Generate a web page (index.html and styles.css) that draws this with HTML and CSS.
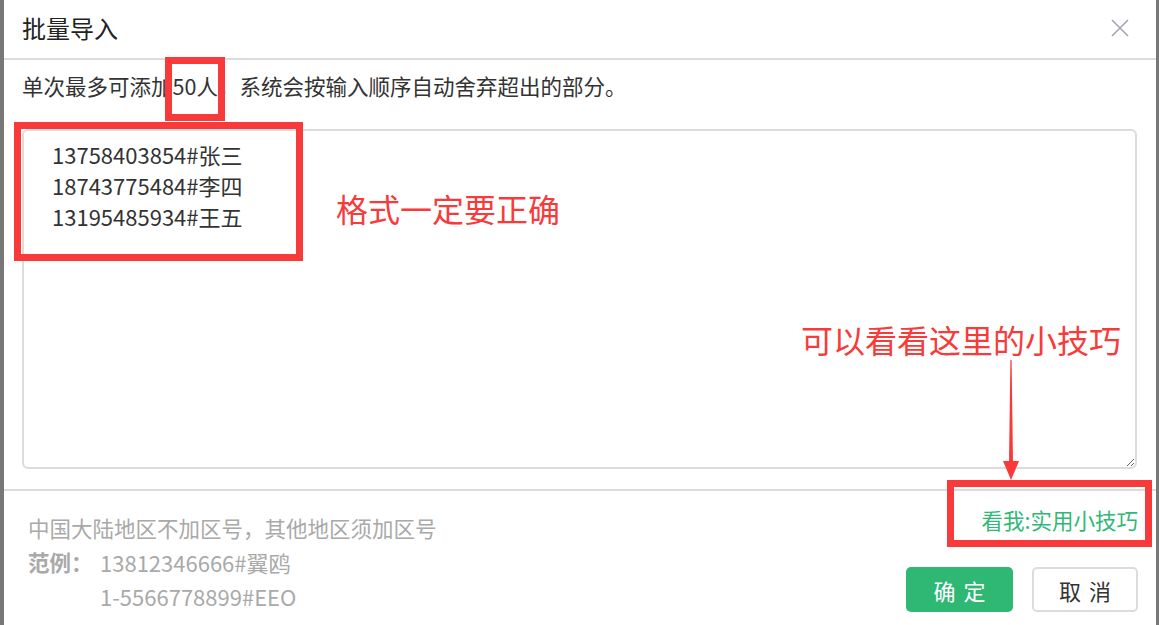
FILE: index.html
```html
<!DOCTYPE html>
<html lang="zh-CN">

<head>
    <meta charset="UTF-8">
    <meta name="viewport" content="width=device-width, initial-scale=1.0">
    <title>批量导入</title>
    <link rel="stylesheet" href="styles.css">
</head>

<body>
    <div class="modal">
        <div class="modal_head">
            <span class="modal_title">批量导入</span>
            <svg class="close" width="18" height="18" viewBox="0 0 18 18">
                <path d="M1 1L17 17M17 1L1 17" stroke="#a2a6b2" stroke-width="1.6" fill="none" />
            </svg>
        </div>
        <div class="modal_body">
            <p class="tips">单次最多可添加<span class="mark">50人</span>，系统会按输入顺序自动舍弃超出的部分。</p>
            <textarea class="input_box">13758403854#张三
18743775484#李四
13195485934#王五</textarea>
        </div>
        <div class="modal_foot">
            <div class="rule">
                <p class="rule_line">中国大陆地区不加区号，其他地区须加区号</p>
                <div class="sample">
                    <span class="sample_label">范例：</span>
                    <div class="sample_list">
                        <span>13812346666#翼鸥</span>
                        <span>1-5566778899#EEO</span>
                    </div>
                </div>
            </div>
            <div class="actions">
                <a class="skill_link">看我:实用小技巧</a>
                <div class="btns">
                    <button class="btn btn_ok">确定</button>
                    <button class="btn btn_cancel">取消</button>
                </div>
            </div>
        </div>

        <!-- 标注 -->
        <div class="note_box"></div>
        <span class="note note_format">格式一定要正确</span>
        <span class="note note_skill">可以看看这里的小技巧</span>
        <svg class="note_arrow" width="16" height="120" viewBox="0 0 16 120">
            <polygon points="7.4,0 8.6,0 10,102 6,102" fill="#f83a3a" />
            <polygon points="0,101 16,101 8,120" fill="#f83a3a" />
        </svg>
    </div>
</body>

</html>
```

FILE: styles.css
```css
* {
    box-sizing: border-box;
}

body {
    margin: 0;
    height: 625px;
    overflow: hidden;
    background: #777;
    font-family: "Noto Sans CJK SC", sans-serif;
    color: #333;
}

p {
    margin: 0;
}

.modal {
    position: relative;
    width: 1152px;
    height: 625px;
    margin-left: 4px;
    background: #fff;
}

.modal_head {
    height: 60px;
    display: flex;
    align-items: center;
    justify-content: space-between;
    padding: 0 27px 2px 18px;
    border-bottom: 2px solid #dcdcdc;
}

.modal_title {
    font-size: 24px;
    line-height: 30px;
    color: #222;
}

.modal_body {
    padding: 14px 19px 20px 18px;
}

.tips {
    font-size: 21.5px;
    line-height: 24px;
    color: #333;
}

.mark {
    position: relative;
}

.mark::after {
    content: "";
    position: absolute;
    left: -8px;
    right: -7px;
    top: -13px;
    bottom: -20px;
    border: 7px solid #f83a3a;
}

.input_box {
    display: block;
    width: 100%;
    height: 340px;
    margin-top: 31px;
    padding: 8px 28px;
    border: 2px solid #dcdcdc;
    border-radius: 6px;
    font-family: "Noto Sans CJK SC", sans-serif;
    font-size: 22px;
    line-height: 31px;
    color: #333;
    outline: none;
}

.modal_foot {
    display: flex;
    justify-content: space-between;
    border-top: 2px solid #dcdcdc;
}

.rule {
    padding: 20px 0 0 24px;
    font-size: 21.5px;
    line-height: 34px;
    color: #a9a9a9;
}

.sample {
    display: flex;
}

.sample_label {
    width: 72px;
    font-weight: bold;
}

.sample_list {
    display: flex;
    flex-direction: column;
    font-size: 22px;
}

.actions {
    display: flex;
    flex-direction: column;
    align-items: flex-end;
    padding: 14px 18px 0 0;
}

.skill_link {
    position: relative;
    font-size: 21.5px;
    line-height: 30px;
    color: #2fb877;
    cursor: pointer;
}

.skill_link::after {
    content: "";
    position: absolute;
    left: -35px;
    right: -14px;
    top: -25px;
    bottom: -12px;
    border: 7px solid #f83a3a;
}

.btns {
    display: flex;
    gap: 19px;
    margin-top: 32px;
}

.btn {
    height: 45px;
    border-radius: 5px;
    font-family: "Noto Sans CJK SC", sans-serif;
    font-size: 22px;
    letter-spacing: 8px;
    padding: 0 0 0 8px;
    cursor: pointer;
}

.btn_ok {
    width: 107px;
    border: none;
    background: #2eb874;
    color: #fff;
}

.btn_cancel {
    width: 106px;
    border: 2px solid #dcdcdc;
    background: #fff;
    color: #333;
}

.note_box {
    position: absolute;
    left: 10px;
    top: 122px;
    width: 289px;
    height: 139px;
    border: 7px solid #f83a3a;
}

.note {
    position: absolute;
    font-size: 32px;
    line-height: 40px;
    color: #f83a3a;
}

.note_format {
    left: 332px;
    top: 188px;
}

.note_skill {
    left: 797px;
    top: 319px;
}

.note_arrow {
    position: absolute;
    left: 999px;
    top: 360px;
}
```
